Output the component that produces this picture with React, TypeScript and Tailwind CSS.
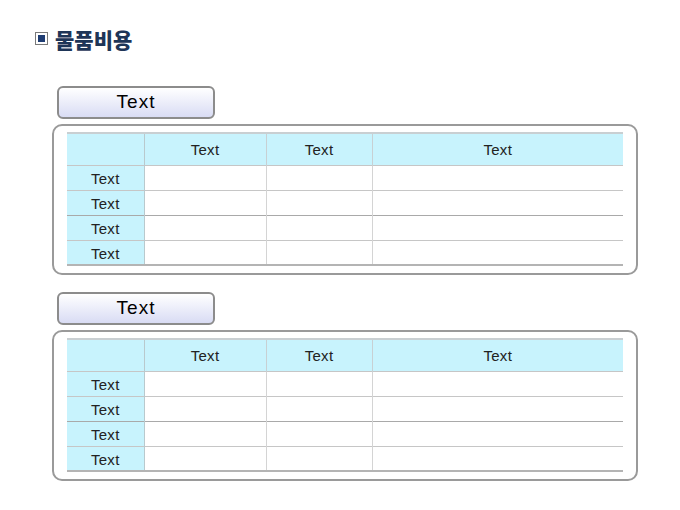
import React from "react";

const rows = ["Text", "Text", "Text", "Text"];

function Section() {
  return (
    <div className="flex flex-col">
      {/* 라벨 버튼 */}
      <div className="ml-[57px] w-[158px] h-[33px] rounded-[6px] border-2 border-[#8c8c8c] bg-gradient-to-b from-white to-[#d9dcf4] flex items-center justify-center text-[19px] tracking-[1px] text-black">
        Text
      </div>

      {/* 표 패널 */}
      <div className="mt-[5px] ml-[52px] w-[586px] h-[151px] rounded-[10px] border-2 border-[#9a9a9a] bg-white pl-[13px] pt-[6px]">
        <table className="border-collapse text-[15px] tracking-[0.3px] text-[#222] table-fixed w-[556px]">
          <colgroup>
            <col className="w-[77px]" />
            <col className="w-[122px]" />
            <col className="w-[106px]" />
            <col />
          </colgroup>
          <thead>
            <tr className="h-[32px] bg-[#c8f3fd] border-t-2 border-[#c9cfd2]">
              <th className="font-normal border-r border-[#b9c9cd]"></th>
              <th className="font-normal border-r border-[#c8d0d3] pt-[1px]">Text</th>
              <th className="font-normal border-r border-[#c8d0d3] pt-[1px]">Text</th>
              <th className="font-normal pt-[1px]">Text</th>
            </tr>
          </thead>
          <tbody>
            {rows.map((r, i) => (
              <tr
                key={i}
                className={
                  i === 3
                    ? "h-[25px] border-t border-[#c6c6c6] border-b-2 border-b-[#b4b4b4]"
                    : i === 2
                    ? "h-[25px] border-t border-[#a9a9a9]"
                    : "h-[25px] border-t border-[#c6c6c6]"
                }
              >
                <td className="bg-[#c8f3fd] text-center border-r border-[#b9c9cd] pt-[2px] p-0 leading-[21px]">{r}</td>
                <td className="border-r border-[#d4d4d4]"></td>
                <td className="border-r border-[#d4d4d4]"></td>
                <td></td>
              </tr>
            ))}
          </tbody>
        </table>
      </div>
    </div>
  );
}

export default function App() {
  return (
    <div
      className="w-[680px] h-[510px] bg-white overflow-hidden"
      style={{ fontFamily: '"Liberation Sans", "Noto Sans CJK KR", sans-serif' }}
    >
      {/* 제목 */}
      <div className="flex items-center pt-[24px] pl-[35px] h-[53px]">
        <div className="w-[13px] h-[13px] border border-[#7a7a7a] bg-white flex items-center justify-center">
          <div className="w-[7px] h-[7px] bg-[#1f3d73]"></div>
        </div>
        <span
          className="ml-[7px] text-[21px] font-black text-[#1e3557] leading-[26px]"
          style={{ fontFamily: '"Noto Sans CJK KR", sans-serif' }}
        >
          물품비용
        </span>
      </div>

      <div className="mt-[33px]">
        <Section />
      </div>
      <div className="mt-[17px]">
        <Section />
      </div>
    </div>
  );
}
